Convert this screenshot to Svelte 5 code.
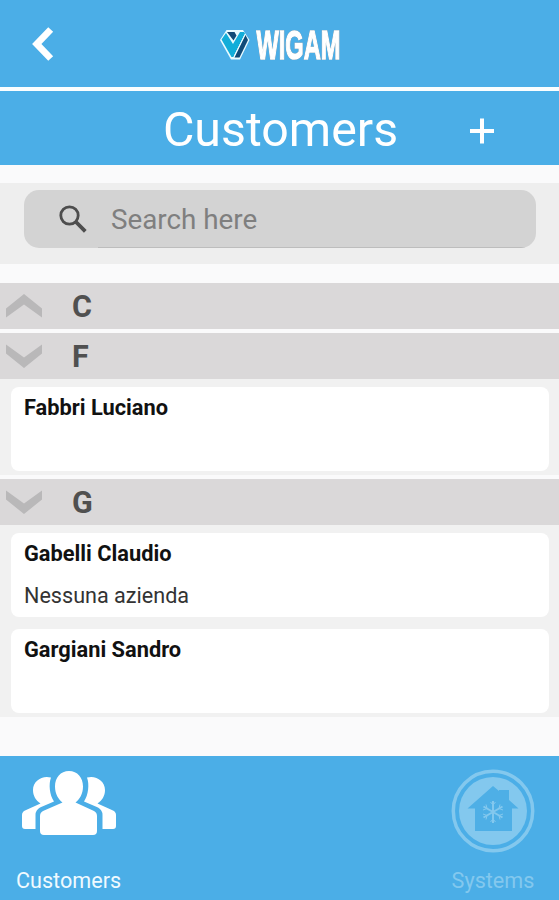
<script>
	let query = '';

	const groups = [
		{ letter: 'C', open: false, customers: [] },
		{ letter: 'F', open: true, customers: [{ name: 'Fabbri Luciano', company: '' }] },
		{
			letter: 'G',
			open: true,
			customers: [
				{ name: 'Gabelli Claudio', company: 'Nessuna azienda' },
				{ name: 'Gargiani Sandro', company: '' }
			]
		}
	];
</script>

<div class="app">
	<header class="topbar">
		<button class="back" aria-label="Back">
			<svg width="24" height="38" viewBox="0 0 24 38" fill="none">
				<path d="M18.7 4.5L4.8 19L18.7 33.5" stroke="#fff" stroke-width="6.8" />
			</svg>
		</button>
		<svg class="logo" width="126" height="56" viewBox="0 -6 126 56">
			<path d="M8.5 7H25L31.5 17L22 36.5H13L2 17Z" fill="#e9fbff" />
			<path d="M9 9H16.5L18.5 12.5L15.5 17.5Z" fill="#114b78" />
			<path d="M3.5 16.5L8 10L15 21L22 9H26L27 10.500L15.500 34H13.500Z" fill="#12add9" />
			<path d="M27.5 12L30 17L21.5 34.500H16.500Z" fill="#114b78" />
			<path d="M16 33.500L27 11.500" stroke="#e9fbff" stroke-width="1" />
			<text x="38.500" y="36" textLength="84" lengthAdjust="spacingAndGlyphs">WIGAM</text>
		</svg>
	</header>

	<div class="titlebar">
		<h1>Customers</h1>
		<button class="add" aria-label="Add customer">
			<svg width="26" height="28" viewBox="0 0 26 28">
				<path d="M13 1.5V26.5M1 14H25" stroke="#fff" stroke-width="4" />
			</svg>
		</button>
	</div>

	<div class="search">
		<label class="field">
			<svg width="30" height="30" viewBox="0 0 30 30" fill="none" stroke="#4d4d4d">
				<circle cx="11.5" cy="11.5" r="8.7" stroke-width="2.8" />
				<path d="M18 18L27.3 27.3" stroke-width="3.8" />
			</svg>
			<input type="text" placeholder="Search here" bind:value={query} />
		</label>
	</div>

	<main class="list">
		{#each groups as group}
			<section>
				<div class="letter">
					<svg class:open={group.open} width="36" height="24" viewBox="0 0 36 24">
						<path d="M0 14.5L18 0L36 14.5V23.5L18 10.5L0 23.5Z" fill="#b9b8b9" />
					</svg>
					<span>{group.letter}</span>
				</div>
				{#if group.open}
					<div class="cards">
						{#each group.customers as customer}
							<article class="card">
								<strong>{customer.name}</strong>
								<p>{customer.company}</p>
							</article>
						{/each}
					</div>
				{/if}
			</section>
		{/each}
	</main>

	<nav class="tabs">
		<a class="tab" href="#customers">
			<svg class="people" width="94" height="66" viewBox="0 0 94 66" fill="#fff">
				<path d="M29 6.5C20 4 11 10 11 19C11 25 14 29.5 18.5 32.5L3 39.5Q0 41 0 44V55Q0 58 3 58H13.5V44Q13.5 39 18 36.5L32 30.5C27.5 24 26.5 13 29 6.5Z" />
				<path d="M65 6.5C74 4 83 10 83 19C83 25 80 29.5 75.5 32.5L91 39.5Q94 41 94 44V55Q94 58 91 58H80.5V44Q80.5 39 76 36.5L62 30.5C66.5 24 67.5 13 65 6.5Z" />
				<path d="M47 0C38.5 0 33 6.5 33 15.5C33 23 36.5 28.5 40.5 31.5L21 40Q18 41.5 18 45V60Q18 64 22 64H71Q75 64 75 60V45Q75 41.5 72 40L53.5 31.5C57.5 28.5 61 23 61 15.5C61 6.5 55.5 0 47 0Z" />
			</svg>
			<span>Customers</span>
		</a>
		<a class="tab inactive" href="#systems">
			<svg width="84" height="84" viewBox="0 0 84 84">
				<circle cx="42" cy="42" r="39.7" fill="none" stroke="#83c8ee" stroke-width="3.5" />
				<circle cx="42" cy="42" r="34" fill="#83c8ee" />
				<path d="M42 17L48 22V21H58V31L67.5 39.5H61V62H24V39.5H16.5Z" fill="#4eafe6" />
				<g fill="none" stroke="#83c8ee" stroke-width="2">
					<path d="M42 32V54M32.5 37.5L51.5 48.5M51.5 37.5L32.5 48.5" />
					<path d="M39.5 33L42 36L44.5 33M39.5 53L42 50L44.5 53M32 41L36 39.5L35 35.5M52 41L48 39.5L49 35.5M32 45L36 46.5L35 50.5M52 45L48 46.5L49 50.5" stroke-width="1" />
				</g>
			</svg>
			<span>Systems</span>
		</a>
	</nav>
</div>

<style>
	:global(body) {
		margin: 0;
	}

	.app {
		box-sizing: border-box;
		width: 100%;
		height: 900px;
		display: flex;
		flex-direction: column;
		background: #fafafb;
		font-family: Roboto, sans-serif;
		overflow: hidden;
	}

	button {
		display: flex;
		padding: 0;
		border: none;
		background: none;
	}

	.topbar,
	.titlebar {
		display: grid;
		grid-template-columns: 1fr auto 1fr;
		align-items: center;
		background: #4baee7;
	}

	.topbar {
		height: 87px;
		border-bottom: 4px solid #fafeff;
	}

	.back {
		margin-left: 32px;
	}

	.logo {
		margin-left: 2px;
		margin-top: 2px;
		overflow: visible;
	}

	.logo text {
		font-family: "Liberation Sans", sans-serif;
		font-size: 41px;
		font-weight: 700;
		fill: #fff;
		stroke: #fff;
		stroke-width: 1.6px;
		filter: drop-shadow(0.5px 0.5px 0.7px #335c7a);
	}

	.titlebar {
		height: 74px;
	}

	h1 {
		grid-column: 2;
		margin: 3px 0 0 2px;
		color: #fff;
		font-size: 48.3px;
		font-weight: 400;
		line-height: 60px;
	}

	.add {
		margin: 5px 0 0 71px;
	}

	.search {
		height: 58px;
		margin-top: 18px;
		padding: 7px 23px 16px 24px;
		background: #eee;
	}

	.field {
		box-sizing: border-box;
		display: flex;
		align-items: center;
		height: 58px;
		padding-left: 34px;
		border-radius: 15px;
		background: #d3d3d3;
		overflow: hidden;
	}

	input {
		box-sizing: border-box;
		flex: 1;
		min-width: 0;
		height: 58px;
		margin-left: 10px;
		padding: 2px 13px 0;
		border: none;
		border-bottom: 1px solid #bdbdbd;
		background: none;
		font: 27.8px Roboto, sans-serif;
		outline: none;
	}

	input::placeholder {
		color: #7f7f7f;
		opacity: 1;
	}

	.list {
		display: flex;
		flex-direction: column;
		gap: 4px;
		margin-top: 19px;
	}

	.letter {
		display: flex;
		align-items: center;
		gap: 30px;
		height: 46px;
		padding-left: 6px;
		background: #dad8d9;
		color: #505050;
		font-size: 30.5px;
		font-weight: 700;
	}

	.letter .open {
		transform: rotate(180deg);
	}

	.cards {
		display: flex;
		flex-direction: column;
		gap: 12px;
		padding: 8px 10px 4px 11px;
		background: #f1f1f1;
	}

	.card {
		box-sizing: border-box;
		height: 84px;
		padding: 7px 13px;
		border-radius: 8px;
		background: #fff;
		color: #111;
		font-size: 21.8px;
		line-height: 28px;
	}

	.card strong {
		display: block;
		font-weight: 700;
	}

	.card p {
		margin: 14px 0 0;
		color: #333;
		font-size: 21.6px;
	}

	.tabs {
		display: flex;
		justify-content: space-between;
		height: 144px;
		margin-top: auto;
		padding: 0 24px 0 16px;
		background: #4baee7;
	}

	.tab {
		display: flex;
		flex-direction: column;
		align-items: center;
		padding-top: 13px;
		color: #f0faff;
		font-size: 21.6px;
		line-height: 28px;
		text-decoration: none;
	}

	.tab span {
		margin-top: 14px;
	}

	.people {
		padding: 2px 0 16px;
	}

	.inactive {
		color: #83c8ee;
	}
</style>
